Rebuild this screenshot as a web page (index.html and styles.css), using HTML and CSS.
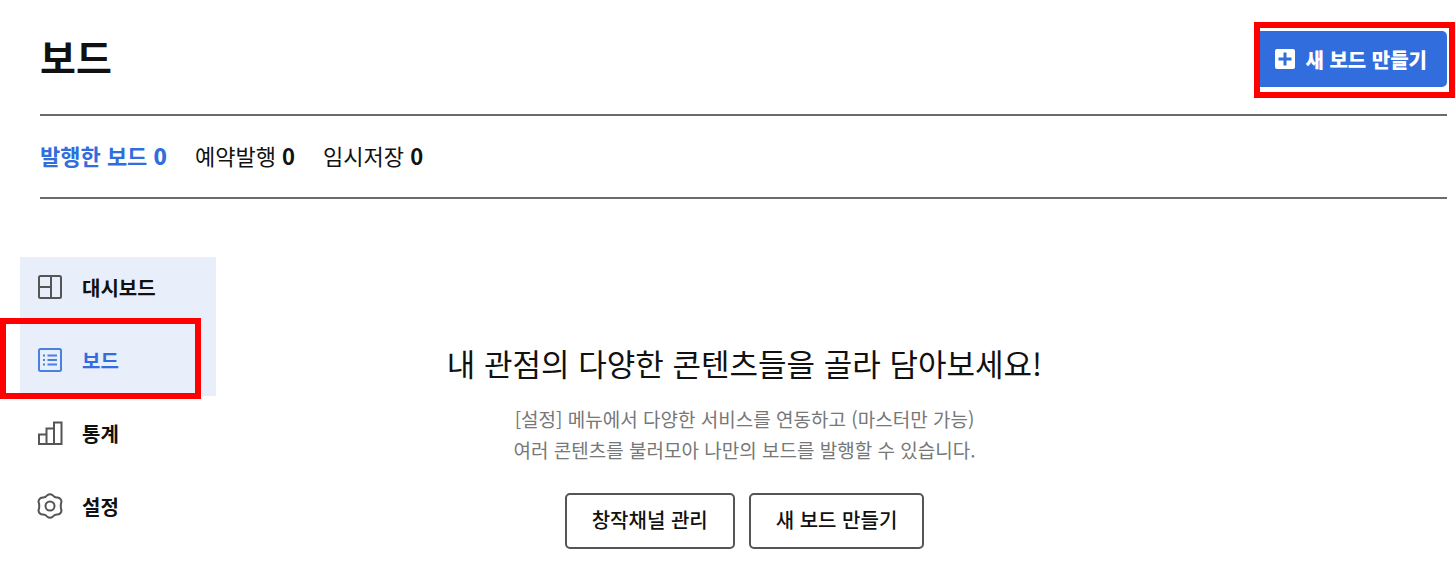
FILE: index.html
```
<!DOCTYPE html>
<html lang="ko">
<head>
  <meta charset="UTF-8">
  <meta name="viewport" content="width=device-width, initial-scale=1.0">
  <title>보드</title>
  <link rel="stylesheet" href="styles.css">
</head>
<body>
  <header class="header">
    <h1>보드</h1>
    <div class="create">
      <button class="create-btn" type="button">
        <svg width="22" height="22" viewBox="0 0 22 22" aria-hidden="true">
          <rect x="1" y="1" width="20" height="20" rx="2" fill="#fff"/>
          <path d="M11 4.5v13M4.5 11h13" stroke="#316ddc" stroke-width="3"/>
        </svg>
        새 보드 만들기
      </button>
      <span class="mark mark-create"></span>
    </div>
  </header>
  <nav class="tabs">
    <a class="active" href="#published">발행한 보드 <b>0</b></a>
    <a href="#reserved">예약발행 <b>0</b></a>
    <a href="#drafts">임시저장 <b>0</b></a>
  </nav>
  <div class="content">
    <nav class="side">
      <div class="side-group">
        <a href="#dashboard">
          <svg width="26" height="26" viewBox="0 0 26 26" aria-hidden="true">
            <rect x="2" y="2" width="22" height="22" rx="1.5"/>
            <path d="M14 2v22M2 13h12"/>
          </svg>
          대시보드
        </a>
        <a class="active" href="#board">
          <svg width="26" height="26" viewBox="0 0 26 26" aria-hidden="true">
            <rect x="2" y="2" width="22" height="22" rx="1.5"/>
            <path d="M6 8.5h2M6 13h2M6 17.5h2M10.5 8.5H20M10.5 13H20M10.5 17.5H20"/>
          </svg>
          보드
          <span class="mark mark-board"></span>
        </a>
      </div>
      <a href="#stats">
        <svg width="26" height="26" viewBox="0 0 26 26" aria-hidden="true">
          <path d="M2 24V14.5h7.500V24M9.500 24V8.500h7.500V24M17 24V2.500h7.500V24M1 24h24.500"/>
        </svg>
        통계
      </a>
      <a href="#settings">
        <svg width="26" height="26" viewBox="0 0 26 26" aria-hidden="true">
          <path d="M10.3 2.200Q13 .2 15.700 2.200Q17.500 4.800 20.500 4.400Q24.200 5 24.500 8.600Q23 13 24.500 17.400Q24.200 21 20.500 21.600Q17.500 21.200 15.700 23.800Q13 25.800 10.300 23.800Q8.500 21.200 5.500 21.600Q1.800 21 1.500 17.400Q3 13 1.500 8.600Q1.800 5 5.500 4.400Q8.500 4.800 10.300 2.200Z"/>
          <circle cx="13" cy="13" r="4.5"/>
        </svg>
        설정
      </a>
    </nav>
    <main class="empty">
      <h2>내 관점의 다양한 콘텐츠들을 골라 담아보세요!</h2>
      <p>[설정] 메뉴에서 다양한 서비스를 연동하고 (마스터만 가능)<br>여러 콘텐츠를 불러모아 나만의 보드를 발행할 수 있습니다.</p>
      <div class="buttons">
        <button type="button">창작채널 관리</button>
        <button type="button">새 보드 만들기</button>
      </div>
    </main>
  </div>
</body>
</html>
```
FILE: styles.css
```
* {
  box-sizing: border-box;
}
body {
  font-family: "Noto Sans CJK KR", sans-serif;
  margin: 0;
  color: #111;
  background-color: #fff;
}
a {
  color: inherit;
  text-decoration: none;
}
button {
  font-family: inherit;
  font-size: 20px;
  height: 56px;
  padding-bottom: 3px;
  border-radius: 5px;
  white-space: nowrap;
  cursor: pointer;
}
.header {
  display: flex;
  justify-content: space-between;
  align-items: flex-start;
  margin: 0 8px 0 40px;
  padding: 31px 0 27px;
  border-bottom: 2px solid #6b6b6b;
}
.header h1 {
  margin: 0;
  font-size: 39px;
  line-height: 50px;
}
.create {
  position: relative;
}
.create-btn {
  display: flex;
  align-items: center;
  gap: 9px;
  padding: 0 20px 0 18px;
  border: none;
  background-color: #316ddc;
  color: #fff;
  font-weight: 900;
}
/* red highlight frames */
.mark {
  position: absolute;
  border: 6px solid #f00;
  pointer-events: none;
}
.mark-create {
  inset: -9px -8px -11px -2px;
}
.mark-board {
  inset: -12px 15px -9px -20px;
}
.tabs {
  display: flex;
  gap: 28px;
  margin: 0 8px 0 40px;
  padding: 23px 0 26px;
  border-bottom: 2px solid #6b6b6b;
  font-size: 22px;
  line-height: 32px;
}
.tabs .active {
  color: #316ddc;
  font-weight: bold;
}
.content {
  display: grid;
  grid-template-columns: 196px 1fr 174px;
  padding: 58px 8px 0 20px;
}
.side {
  display: flex;
  flex-direction: column;
  gap: 13px;
}
.side-group {
  display: flex;
  flex-direction: column;
  gap: 13px;
  padding-bottom: 6px;
  margin-bottom: -6px;
  background-color: #e9eefb;
}
.side a {
  position: relative;
  display: flex;
  align-items: center;
  gap: 19px;
  height: 60px;
  padding-left: 17px;
  font-size: 20px;
  font-weight: bold;
}
.side svg {
  fill: none;
  stroke: #555;
  stroke-width: 2;
}
.side .active {
  color: #316ddc;
}
.side .active svg {
  stroke: #4a80e2;
}
.empty {
  padding-top: 83px;
  text-align: center;
}
.empty h2 {
  margin: 0;
  font-size: 31px;
  font-weight: normal;
  line-height: 46px;
}
.empty p {
  margin: 17px 0 28px;
  color: #777;
  font-size: 19px;
  line-height: 31px;
}
.buttons {
  display: flex;
  justify-content: center;
  gap: 14px;
}
.buttons button {
  padding: 0 25px 3px;
  border: 2px solid #555;
  background-color: #fff;
  color: #111;
  font-weight: 500;
}
```
